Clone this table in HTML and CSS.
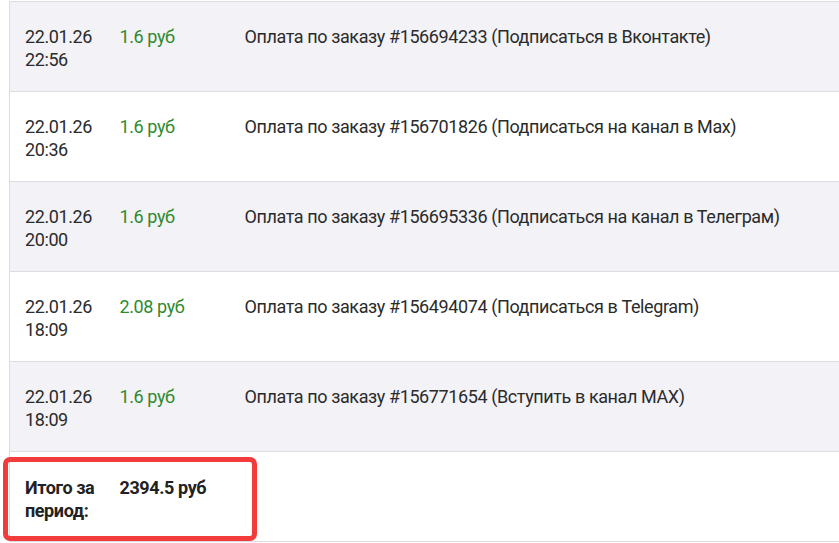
FILE: index.html
```html
<!DOCTYPE html>
<html lang="ru">
<head>
<meta charset="utf-8">
<title>Операции</title>
<link rel="stylesheet" href="styles.css">
</head>
<body>
<div class="page">
  <table class="ops">
    <colgroup>
      <col class="w-date">
      <col class="w-sum">
      <col class="w-desc">
    </colgroup>
    <tbody>
      <tr class="shade">
        <td class="c-date">22.01.26<br>22:56</td>
        <td class="c-sum">1.6 руб</td>
        <td class="c-desc">Оплата по заказу #156694233 (Подписаться в Вконтакте)</td>
      </tr>
      <tr>
        <td class="c-date">22.01.26<br>20:36</td>
        <td class="c-sum">1.6 руб</td>
        <td class="c-desc">Оплата по заказу #156701826 (Подписаться на канал в Max)</td>
      </tr>
      <tr class="shade">
        <td class="c-date">22.01.26<br>20:00</td>
        <td class="c-sum">1.6 руб</td>
        <td class="c-desc">Оплата по заказу #156695336 (Подписаться на канал в Телеграм)</td>
      </tr>
      <tr>
        <td class="c-date">22.01.26<br>18:09</td>
        <td class="c-sum">2.08 руб</td>
        <td class="c-desc">Оплата по заказу #156494074 (Подписаться в Telegram)</td>
      </tr>
      <tr class="shade">
        <td class="c-date">22.01.26<br>18:09</td>
        <td class="c-sum">1.6 руб</td>
        <td class="c-desc">Оплата по заказу #156771654 (Вступить в канал MAX)</td>
      </tr>
      <tr class="total">
        <td class="c-date">Итого за<br>период:</td>
        <td class="c-sum">2394.5 руб</td>
        <td class="c-desc"></td>
      </tr>
    </tbody>
  </table>
  <div class="highlight"></div>
</div>
</body>
</html>
```

FILE: styles.css
```css
html, body {
  margin: 0;
  padding: 0;
  background: #ffffff;
}

body {
  font-family: Roboto, "Noto Sans", sans-serif;
  font-size: 18px;
  letter-spacing: -0.4px;
  color: #2b2b2b;
}

.page {
  position: relative;
  padding: 1px 0 0 9px;
}

.ops {
  border-collapse: collapse;
  table-layout: fixed;
  width: 830px;
  border-left: 1px solid #dcdce2;
}

.w-date { width: 95px; }
.w-sum { width: 125px; }

.ops td {
  border-top: 1px solid #dcdce2;
  border-bottom: 1px solid #dcdce2;
  padding: 23px 0 20px 15px;
  line-height: 23px;
  vertical-align: top;
  text-align: left;
  white-space: nowrap;
  overflow: hidden;
}

.ops tr.shade td {
  background: #f2f2f7;
}

.c-sum {
  color: #2f8a2f;
}

.total td {
  font-weight: 700;
  color: #222222;
  padding-top: 24px;
  padding-bottom: 19px;
}

.total .c-sum {
  color: #222222;
}

.highlight {
  position: absolute;
  left: 3px;
  top: 457px;
  width: 244px;
  height: 74px;
  border: 5px solid #f23b3b;
  border-radius: 7px;
}
```
